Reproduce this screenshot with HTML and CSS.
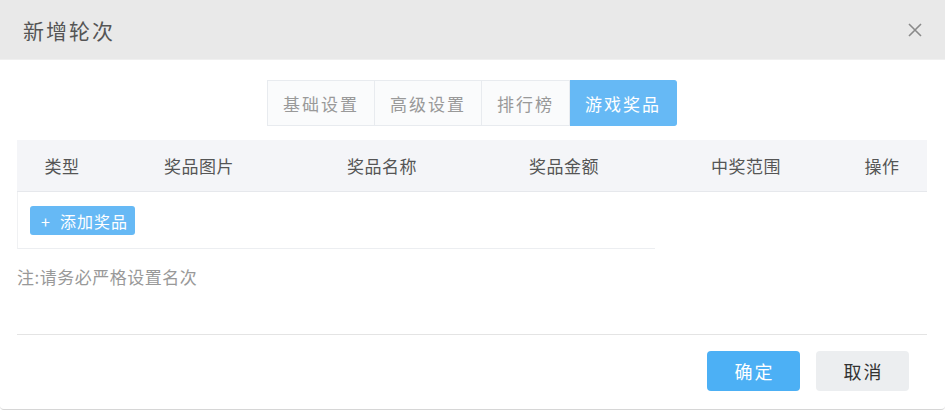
FILE: index.html
```html
<!DOCTYPE html>
<html lang="zh-CN">
<head>
  <meta charset="UTF-8">
  <title>新增轮次</title>
  <link rel="stylesheet" href="styles.css">
</head>
<body>
  <div class="dialog">
    <header class="dialog-head">
      <h1>新增轮次</h1>
      <span class="close">
        <svg width="16" height="16" viewBox="0 0 16 16"><path d="M2 2L14 14M14 2L2 14" stroke="#8a8a8a" stroke-width="1.6" fill="none"/></svg>
      </span>
    </header>

    <main class="dialog-body">
      <nav class="tabs">
        <a>基础设置</a>
        <a>高级设置</a>
        <a>排行榜</a>
        <a class="active">游戏奖品</a>
      </nav>

      <div class="prize-table">
        <div class="thead">
          <span>类型</span>
          <span>奖品图片</span>
          <span>奖品名称</span>
          <span>奖品金额</span>
          <span>中奖范围</span>
          <span>操作</span>
        </div>
        <div class="tbody">
          <button class="add-btn">+&nbsp;&nbsp;添加奖品</button>
        </div>
      </div>

      <p class="note">注:请务必严格设置名次</p>
    </main>

    <footer class="dialog-foot">
      <button class="btn primary">确定</button>
      <button class="btn">取消</button>
    </footer>
  </div>
</body>
</html>
```

FILE: styles.css
```css
body {
  margin: 0;
  background: #fff;
  font-family: "Noto Sans CJK SC", "Noto Sans", sans-serif;
  color: #555;
}
.dialog {
  width: 945px;
  height: 410px;
  border-bottom: 1px solid #d6d6d6;
  border-radius: 0 0 4px 4px;
  box-sizing: border-box;
}
.dialog-head {
  height: 59px;
  background: #e9e9e9;
  border-bottom: 1px solid #f0f0f0;
  display: flex;
  align-items: center;
  justify-content: space-between;
  padding: 0 22px 0 23px;
}
.dialog-head h1 {
  margin: 0;
  font-size: 21px;
  font-weight: normal;
  color: #555;
  letter-spacing: 2px;
}
.close {
  display: flex;
}
.dialog-body {
  padding: 0 18px 0 17px;
}
.tabs {
  display: flex;
  justify-content: center;
  margin-top: 20px;
}
.tabs a {
  height: 46px;
  box-sizing: border-box;
  display: flex;
  align-items: center;
  padding: 0 15px;
  font-size: 17px;
  letter-spacing: 2px;
  color: #999;
  background: #fafbfc;
  border: 1px solid #e8ebef;
  border-left: none;
}
.tabs a:first-child {
  border-left: 1px solid #e8ebef;
}
.tabs a.active {
  background: #66b9f5;
  border-color: #66b9f5;
  color: #fff;
  border-radius: 0 3px 3px 0;
}
.prize-table {
  margin-top: 14px;
}
.thead {
  display: grid;
  grid-template-columns: 90px 184px 182px 182px 182px 90px;
  height: 52px;
  background: #f4f5f8;
  border-bottom: 1px solid #e6e8ec;
  box-sizing: border-box;
  align-items: center;
  font-size: 17px;
  letter-spacing: 0.5px;
  color: #555;
}
.thead span {
  text-align: center;
}
.tbody {
  width: 638px;
  box-sizing: border-box;
  border-left: 1px solid #f0f1f3;
  border-bottom: 1px solid #eceef1;
  padding: 14px 0 13px 12px;
}
.add-btn {
  display: block;
  height: 29px;
  width: 105px;
  border: none;
  border-radius: 3px;
  background: #66b9f5;
  color: #fff;
  font-family: inherit;
  font-size: 16px;
  letter-spacing: 1px;
  padding: 0 0 0 4px;
}
.note {
  margin: 16px 0 0;
  line-height: 24px;
  font-size: 17px;
  letter-spacing: 0.5px;
  color: #999;
}
.dialog-foot {
  margin: 45px 18px 0 17px;
  border-top: 1px solid #e4e4e4;
  display: flex;
  justify-content: flex-end;
  gap: 16px;
  padding: 16px 18px 0 0;
}
.btn {
  width: 93px;
  height: 40px;
  border: none;
  border-radius: 4px;
  background: #eceef0;
  color: #333;
  font-family: inherit;
  font-size: 18px;
  letter-spacing: 2px;
  padding: 0 0 0 2px;
}
.btn.primary {
  background: #4cb0f5;
  color: #fff;
}
```
